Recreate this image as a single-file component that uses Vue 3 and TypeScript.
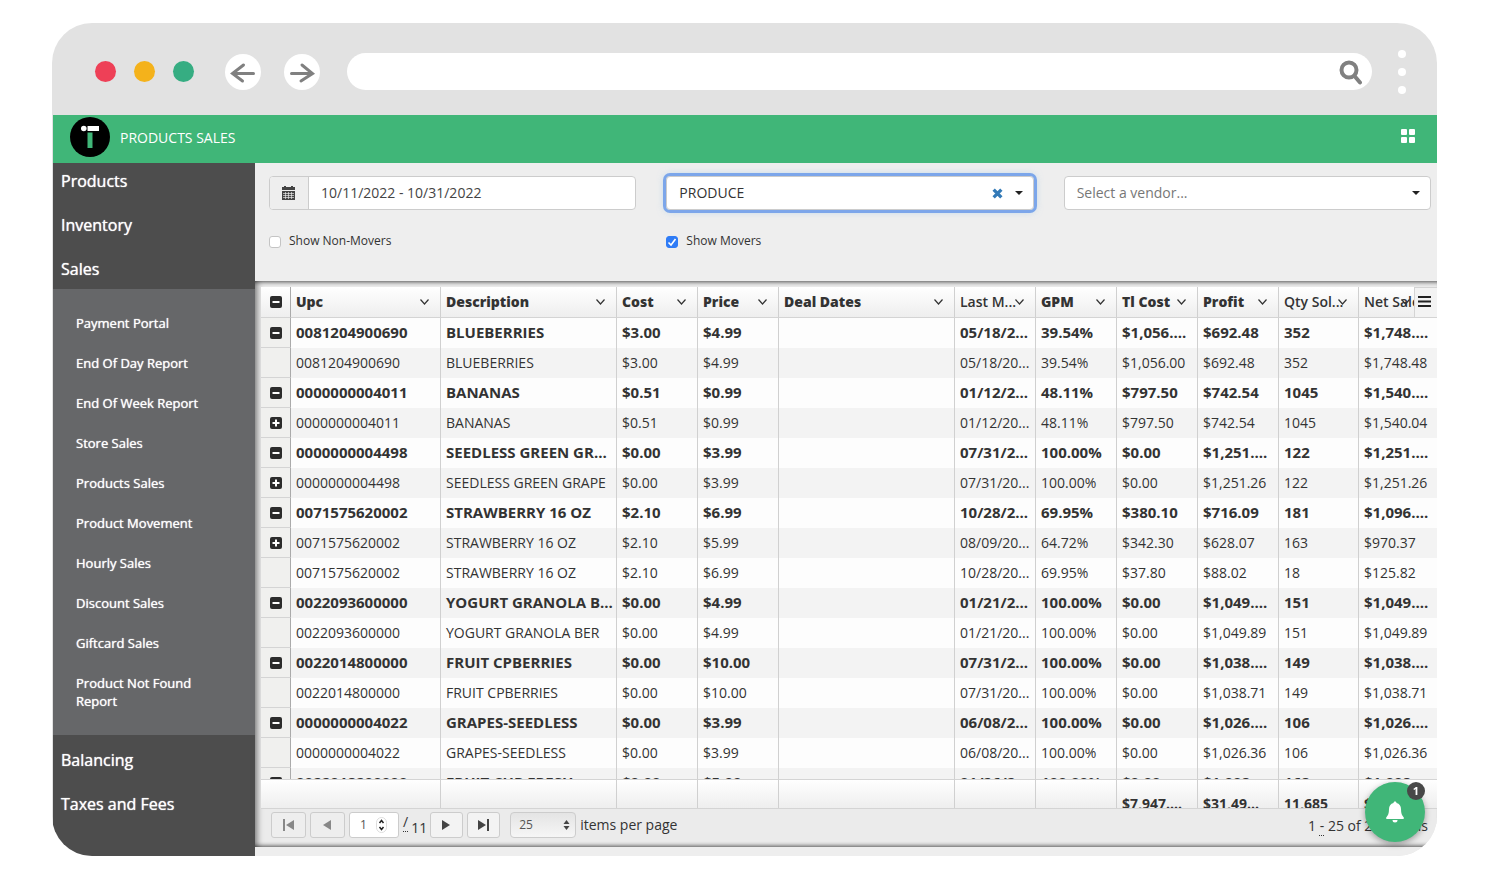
<script setup lang="ts">
import { ref } from 'vue'

type Toggle = 'minus' | 'plus' | ''
interface Row {
  toggle: Toggle
  group: boolean
  cells: string[]
}

const submenu = [
  'Payment Portal', 'End Of Day Report', 'End Of Week Report', 'Store Sales', 'Products Sales',
  'Product Movement', 'Hourly Sales', 'Discount Sales', 'Giftcard Sales', 'Product Not Found Report',
]

const columns = [
  { label: 'Upc', cls: 'c-upc', strong: true },
  { label: 'Description', cls: 'c-wide', strong: true },
  { label: 'Cost', cls: 'c-num', strong: true },
  { label: 'Price', cls: 'c-num', strong: true },
  { label: 'Deal Dates', cls: 'c-auto', strong: true },
  { label: 'Last M...', cls: 'c-num', strong: false },
  { label: 'GPM', cls: 'c-num', strong: true },
  { label: 'Tl Cost', cls: 'c-num', strong: true },
  { label: 'Profit', cls: 'c-num', strong: true },
  { label: 'Qty Sol...', cls: 'c-qty', strong: false },
  { label: 'Net Sales', cls: 'c-net', strong: false },
]

const row = (toggle: Toggle, group: boolean, ...cells: string[]): Row => ({ toggle, group, cells })

const rows: Row[] = [
  row('minus', true, '0081204900690', 'BLUEBERRIES', '$3.00', '$4.99', '', '05/18/2...', '39.54%', '$1,056....', '$692.48', '352', '$1,748....'),
  row('', false, '0081204900690', 'BLUEBERRIES', '$3.00', '$4.99', '', '05/18/20...', '39.54%', '$1,056.00', '$692.48', '352', '$1,748.48'),
  row('minus', true, '0000000004011', 'BANANAS', '$0.51', '$0.99', '', '01/12/2...', '48.11%', '$797.50', '$742.54', '1045', '$1,540....'),
  row('plus', false, '0000000004011', 'BANANAS', '$0.51', '$0.99', '', '01/12/20...', '48.11%', '$797.50', '$742.54', '1045', '$1,540.04'),
  row('minus', true, '0000000004498', 'SEEDLESS GREEN GR...', '$0.00', '$3.99', '', '07/31/2...', '100.00%', '$0.00', '$1,251....', '122', '$1,251....'),
  row('plus', false, '0000000004498', 'SEEDLESS GREEN GRAPE', '$0.00', '$3.99', '', '07/31/20...', '100.00%', '$0.00', '$1,251.26', '122', '$1,251.26'),
  row('minus', true, '0071575620002', 'STRAWBERRY 16 OZ', '$2.10', '$6.99', '', '10/28/2...', '69.95%', '$380.10', '$716.09', '181', '$1,096....'),
  row('plus', false, '0071575620002', 'STRAWBERRY 16 OZ', '$2.10', '$5.99', '', '08/09/20...', '64.72%', '$342.30', '$628.07', '163', '$970.37'),
  row('', false, '0071575620002', 'STRAWBERRY 16 OZ', '$2.10', '$6.99', '', '10/28/20...', '69.95%', '$37.80', '$88.02', '18', '$125.82'),
  row('minus', true, '0022093600000', 'YOGURT GRANOLA B...', '$0.00', '$4.99', '', '01/21/2...', '100.00%', '$0.00', '$1,049....', '151', '$1,049....'),
  row('', false, '0022093600000', 'YOGURT GRANOLA BER', '$0.00', '$4.99', '', '01/21/20...', '100.00%', '$0.00', '$1,049.89', '151', '$1,049.89'),
  row('minus', true, '0022014800000', 'FRUIT CPBERRIES', '$0.00', '$10.00', '', '07/31/2...', '100.00%', '$0.00', '$1,038....', '149', '$1,038....'),
  row('', false, '0022014800000', 'FRUIT CPBERRIES', '$0.00', '$10.00', '', '07/31/20...', '100.00%', '$0.00', '$1,038.71', '149', '$1,038.71'),
  row('minus', true, '0000000004022', 'GRAPES-SEEDLESS', '$0.00', '$3.99', '', '06/08/2...', '100.00%', '$0.00', '$1,026....', '106', '$1,026....'),
  row('', false, '0000000004022', 'GRAPES-SEEDLESS', '$0.00', '$3.99', '', '06/08/20...', '100.00%', '$0.00', '$1,026.36', '106', '$1,026.36'),
  row('minus', true, '0022018200000', 'FRUIT CUP FRESH', '$0.00', '$5.99', '', '01/26/2...', '100.00%', '$0.00', '$1,008....', '168', '$1,008....'),
]

const totals = ['', '', '', '', '', '', '', '$7,947....', '$31,49...', '11,685', '$39,4...']

const dates = ref('10/11/2022 - 10/31/2022')
const department = ref('PRODUCE')
const vendor = ref('')
const nonMovers = ref(false)
const movers = ref(true)
const page = ref(1)
const pageSize = ref('25')
</script>

<template>
  <div class="browser">
    <header class="chrome">
      <div class="lights"><i class="red"></i><i class="amber"></i><i class="green"></i></div>
      <button class="round" aria-label="Back">
        <svg width="36" height="36" viewBox="0 0 36 36"><path d="M28.500 19.500H8M18.500 11L7.500 19.500L17.500 27" /></svg>
      </button>
      <button class="round" aria-label="Forward">
        <svg width="36" height="36" viewBox="0 0 36 36"><path d="M7.500 19.500H28M18 11L28.500 19.500L17 27" /></svg>
      </button>
      <div class="address">
        <input type="text" aria-label="Address" />
        <svg width="24" height="26" viewBox="0 0 24 26"><circle cx="10" cy="11" r="7.500" /><path d="M15.500 17L21 23.500" /></svg>
      </div>
      <button class="dots" aria-label="Browser menu"><i></i><i></i><i></i></button>
    </header>

    <div class="app">
      <div class="topbar">
        <svg class="logo" width="40" height="40" viewBox="0 0 40 40">
          <circle cx="20" cy="20" r="20" fill="#000" />
          <circle cx="13.800" cy="11.500" r="2.800" fill="#fff" />
          <rect x="17.500" y="9" width="11.500" height="5" fill="#fff" />
          <rect x="17.500" y="15.500" width="5" height="15.500" fill="#40b678" />
        </svg>
        <h1>PRODUCTS SALES</h1>
        <button class="apps" aria-label="Apps">
          <svg width="14" height="14" viewBox="0 0 14 14" fill="#fff">
            <rect width="6" height="6" rx="1" /><rect x="8" width="6" height="6" rx="1" />
            <rect y="8" width="6" height="6" rx="1" /><rect x="8" y="8" width="6" height="6" rx="1" />
          </svg>
        </button>
      </div>

      <div class="body">
        <nav class="sidebar">
          <div class="group">
            <a href="#">Products</a>
            <a href="#">Inventory</a>
            <a href="#">Sales</a>
          </div>
          <div class="sub">
            <a v-for="item in submenu" :key="item" href="#">{{ item }}</a>
          </div>
          <div class="group lower">
            <a href="#">Balancing</a>
            <a href="#">Taxes and Fees</a>
          </div>
        </nav>

        <main>
          <form class="filters" @submit.prevent>
            <div class="field">
              <div class="box date">
                <label for="dates" aria-label="Date range">
                  <svg width="13" height="14" viewBox="0 0 13 14">
                    <path fill="#444" d="M0 1h2V0h2v1h5V0h2v1h2v3H0z" />
                    <path fill="#444" d="M0 5h13v9H0z" />
                    <path stroke="#eee" stroke-width="1" fill="none" d="M1 7.500h11M1 9.500h11M1 11.500h11M3.500 6v7M6.500 6v7M9.500 6v7" opacity=".65" />
                  </svg>
                </label>
                <input id="dates" v-model="dates" type="text" />
              </div>
              <label class="check"><input v-model="nonMovers" type="checkbox" /><span>Show Non-Movers</span></label>
            </div>
            <div class="field">
              <div class="box pick focused">
                <select v-model="department" aria-label="Department"><option>PRODUCE</option></select>
                <button type="button" class="clear" aria-label="Clear department">
                  <svg width="11" height="11" viewBox="0 0 10 10"><path d="M1.500 1.500L8.500 8.500M8.500 1.500L1.500 8.500" stroke="#337ab7" stroke-width="3" /></svg>
                </button>
                <i class="caret"></i>
              </div>
              <label class="check"><input v-model="movers" type="checkbox" /><span>Show Movers</span></label>
            </div>
            <div class="field">
              <div class="box pick empty">
                <select v-model="vendor" aria-label="Vendor"><option value="">Select a vendor...</option></select>
                <i class="caret"></i>
              </div>
            </div>
          </form>

          <section class="panel">
            <div class="grid">
              <table>
                <thead>
                  <tr>
                    <th class="tog">
                      <button aria-label="Collapse all"><svg width="12" height="12" viewBox="0 0 12 12"><rect width="12" height="12" rx="2" fill="#2b2b2b" /><path d="M2.500 6h7" stroke="#fff" stroke-width="2" /></svg></button>
                    </th>
                    <th v-for="c in columns" :key="c.label" :class="[c.cls, { strong: c.strong }]">
                      <div class="head">
                        <span>{{ c.label }}</span>
                        <svg width="9" height="6" viewBox="0 0 9 6"><path d="M0.500 0.500L4.500 5L8.500 0.500" fill="none" stroke="#333" stroke-width="1.200" /></svg>
                      </div>
                    </th>
                  </tr>
                </thead>
                <tbody>
                  <tr v-for="(r, i) in rows" :key="i" :class="{ bold: r.group }">
                    <td class="tog">
                      <button v-if="r.toggle" :aria-label="r.toggle === 'minus' ? 'Collapse' : 'Expand'">
                        <svg width="12" height="12" viewBox="0 0 12 12">
                          <rect width="12" height="12" rx="2" fill="#2b2b2b" />
                          <path :d="r.toggle === 'minus' ? 'M2.5 6h7' : 'M2.5 6h7M6 2.5v7'" stroke="#fff" stroke-width="2" />
                        </svg>
                      </button>
                    </td>
                    <td v-for="(cell, j) in r.cells" :key="j">{{ cell }}</td>
                  </tr>
                </tbody>
                <tfoot>
                  <tr>
                    <td class="tog"></td>
                    <td v-for="(t, j) in totals" :key="j"><div>{{ t }}</div></td>
                  </tr>
                </tfoot>
              </table>
              <button class="menu" aria-label="Grid menu">
                <svg width="13" height="11" viewBox="0 0 13 11"><path d="M0 1h13M0 5.500h13M0 10h13" stroke="#222" stroke-width="2" /></svg>
              </button>
            </div>

            <footer class="pager">
              <button class="off" aria-label="First page"><svg width="13" height="12" viewBox="0 0 13 12"><path d="M1 0h2v12H1zM12 1v10L4 6z" /></svg></button>
              <button class="off" aria-label="Previous page"><svg width="13" height="12" viewBox="0 0 13 12"><path d="M10 1v10L2 6z" /></svg></button>
              <div class="num">
                <input v-model="page" type="text" aria-label="Page" />
                <svg width="11" height="16" viewBox="0 0 11 16">
                  <rect x=".5" y=".5" width="10" height="15" rx="5" fill="#fff" stroke="#ddd" />
                  <path d="M3.500 6L5.500 3.500L7.500 6M3.500 10L5.500 12.500L7.500 10" fill="none" stroke="#222" stroke-width="1.500" />
                </svg>
              </div>
              <span class="of"><abbr title="of">/</abbr><span>11</span></span>
              <button aria-label="Next page"><svg width="13" height="12" viewBox="0 0 13 12"><path d="M2 1v10L10 6z" /></svg></button>
              <button aria-label="Last page"><svg width="13" height="12" viewBox="0 0 13 12"><path d="M1 1v10L9 6zM10 0h2v12h-2z" /></svg></button>
              <label class="size">
                <span class="selectbox">
                  <select v-model="pageSize"><option>25</option></select>
                  <svg width="7" height="10" viewBox="0 0 7 10"><path d="M3.500 0L6.500 4H.5zM3.500 10L6.500 6H.5z" fill="#444" /></svg>
                </span>
                <span>items per page</span>
              </label>
              <span class="count">1 <abbr title="through">-</abbr> 25 of 264 items</span>
            </footer>
          </section>
        </main>
      </div>

      <button class="bell" aria-label="Notifications">
        <svg width="20" height="22" viewBox="0 0 20 22" fill="#fff">
          <path d="M10 0.500c1 0 1.500.6 1.500 1.500C14.500 2.700 16 5 16 8c0 4.500 1 6.500 2.600 8.200.6.800.2 1.800-.8 1.800H2.200c-1 0-1.400-1-.8-1.800C3 14.500 4 12.500 4 8c0-3 1.500-5.300 4.500-6 0-.9.500-1.500 1.500-1.500z" />
          <path d="M7.500 19h5a2.500 2.500 0 0 1-5 0z" />
        </svg>
        <span class="badge">1</span>
      </button>
    </div>
  </div>
</template>

<style>
body {
  margin: 0;
  background: #fff;
}
</style>

<style scoped>
* {
  box-sizing: border-box;
}
.browser {
  display: flex;
  flex-direction: column;
  height: calc(100vh - 48px);
  margin: 23px 52px 0;
  border-radius: 40px;
  overflow: hidden;
  background: #e2e2e2;
  font: 14px/20px "Open Sans", "Noto Sans", sans-serif;
  color: #333;
}
button,
input,
select {
  font: inherit;
  color: inherit;
  margin: 0;
}
button {
  display: flex;
  align-items: center;
  justify-content: center;
  border: 0;
  padding: 0;
  background: none;
}
a {
  color: #fff;
  text-decoration: none;
}
.chrome {
  display: flex;
  align-items: center;
  height: 92px;
  flex: none;
  padding: 5px 31px 0 43px;
}
.lights {
  display: flex;
  gap: 18px;
  margin-right: 31px;
}
.lights i {
  width: 21px;
  height: 21px;
  border-radius: 50%;
}
.red { background: #ee4057; }
.amber { background: #f4b21b; }
.green { background: #36ad82; }
.round {
  width: 36px;
  height: 36px;
  margin-right: 23px;
  border-radius: 50%;
  background: #fff;
}
.round svg {
  fill: none;
  stroke: #808080;
  stroke-width: 3;
  stroke-linecap: round;
}
.round + .address {
  margin-left: 4px;
}
.address {
  flex: 1;
  display: flex;
  align-items: center;
  height: 37px;
  padding: 0 9px 0 16px;
  border-radius: 19px;
  background: #fff;
}
.address input {
  flex: 1;
  min-width: 0;
  border: 0;
  outline: 0;
  background: none;
}
.address svg {
  fill: none;
  stroke: #808080;
  stroke-width: 4;
  stroke-linecap: round;
}
.dots {
  flex-direction: column;
  gap: 10px;
  margin-left: 26px;
}
.dots i {
  width: 8px;
  height: 8px;
  border-radius: 50%;
  background: #fff;
}
.app {
  position: relative;
  flex: 1;
  min-height: 0;
  display: flex;
  flex-direction: column;
  margin-left: 1px;
}
.topbar {
  display: flex;
  align-items: center;
  height: 48px;
  flex: none;
  padding: 0 22px 4px 17px;
  background: #40b678;
  color: #fff;
}
h1 {
  flex: 1;
  margin: 2px 0 0 10px;
  font-size: 14px;
  font-weight: 400;
}
.apps {
  margin-top: -2px;
}
.body {
  flex: 1;
  min-height: 0;
  display: flex;
}
.sidebar {
  width: 202px;
  flex: none;
  background: #4d4d4d;
  text-shadow: 0 0 1px #fff;
}
.group {
  display: flex;
  flex-direction: column;
  gap: 8px;
  padding-bottom: 2px;
}
.group a {
  padding: 6px 8px;
  font-size: 16px;
  line-height: 24px;
}
.lower {
  padding-top: 7px;
}
.sub {
  display: flex;
  flex-direction: column;
  gap: 22px;
  padding: 25px 40px 25px 23px;
  background: #666769;
}
.sub a {
  font-size: 13px;
  line-height: 18px;
}
main {
  flex: 1;
  min-width: 0;
  display: flex;
  flex-direction: column;
  padding-bottom: 9px;
  background: #eee;
}
.filters {
  display: grid;
  grid-template-columns: repeat(3, 1fr);
  gap: 30px;
  height: 118px;
  flex: none;
  padding: 13px 6px 0 14px;
}
.box {
  position: relative;
  display: flex;
  height: 34px;
  border: 1px solid #ccc;
  border-radius: 4px;
  background: #fff;
}
.date label {
  display: flex;
  align-items: center;
  justify-content: center;
  width: 39px;
  padding-right: 1px;
  border-right: 1px solid #ccc;
  border-radius: 3px 0 0 3px;
  background: #eee;
}
.box input,
.box select {
  flex: 1;
  min-width: 0;
  padding: 0 12px;
  border: 0;
  border-radius: 4px;
  outline: 0;
  background: none;
  color: #444;
  appearance: none;
}
.focused {
  outline: 3px solid #7ca6ea;
  box-shadow: 0 0 8px rgba(102, 175, 233, 0.6);
}
.box.focused select {
  color: #333;
}
.box.empty select {
  color: #777;
}
.caret {
  position: absolute;
  right: 10px;
  top: 14px;
  border: 4px solid transparent;
  border-top-color: #222;
  border-bottom: 0;
}
.clear {
  position: absolute;
  right: 30px;
  top: 11px;
}
.check {
  display: flex;
  align-items: center;
  gap: 8px;
  margin-top: 21px;
  font-size: 12px;
}
.check input {
  appearance: none;
  width: 12px;
  height: 12px;
  margin-top: 2px;
  border: 1px solid #c4c4c4;
  border-radius: 3px;
  background: #fff;
}
.check input:checked {
  border-color: #2f7cf6;
  background: #2f7cf6 url("data:image/svg+xml,%3Csvg xmlns='http://www.w3.org/2000/svg' viewBox='0 0 10 10'%3E%3Cpath d='M1.500 5.500L4 8L8.500 2' fill='none' stroke='white' stroke-width='1.600'/%3E%3C/svg%3E") center / 10px;
}
.panel {
  flex: 1;
  min-height: 0;
  display: flex;
  flex-direction: column;
  padding: 6px 0 0 6px;
  background: #ebebeb;
  box-shadow: inset 7px 0 6px -5px rgba(0, 0, 0, 0.5), inset 0 5px 4px -4px rgba(0, 0, 0, 0.65),
    inset 0 -5px 4px -4px rgba(0, 0, 0, 0.65);
}
.grid {
  position: relative;
  flex: 1;
  min-height: 0;
  overflow: hidden;
  border-bottom: 1px solid #d4d4d4;
}
table {
  width: 100%;
  table-layout: fixed;
  border-spacing: 0;
}
th,
td {
  padding: 0 2px 0 5px;
  border-right: 1px solid #d0d0d0;
  overflow: hidden;
  text-align: left;
  text-overflow: ellipsis;
  white-space: nowrap;
}
th:last-child,
td:last-child {
  border-right: 0;
}
thead th {
  height: 31px;
  border-bottom: 1px solid #d4d4d4;
  background: linear-gradient(#fff, #eee);
  font-weight: 600;
}
thead .strong {
  font-weight: 800;
}
.head {
  display: flex;
  align-items: center;
}
.head span {
  flex: 1;
}
.head svg {
  flex: none;
  margin: 0 9px 0 -9px;
}
.tog {
  width: 30px;
  padding: 0;
}
.tog button {
  width: 29px;
  height: 28px;
}
.c-upc { width: 150px; }
.c-wide { width: 176px; }
.c-num { width: 81px; }
.c-qty { width: 80px; }
.c-net { width: 78px; }
.c-net .head svg { margin-right: 25px; margin-left: -34px; }
tbody td {
  height: 30px;
  background: #fdfdfd;
}
tbody tr:nth-child(even) td {
  background: #f3f3f3;
}
tbody tr .tog,
tbody tr:nth-child(even) .tog {
  border-right-color: #aaa;
  border-bottom: 1px solid #d4d4d4;
  background: #f0f0ee;
}
thead .tog {
  border-right-color: #aaa;
}
.bold td {
  font-size: 15px;
  font-weight: 700;
}
.bold td:not(.tog) {
  padding-bottom: 2px;
}
tfoot td {
  position: sticky;
  bottom: 0;
  height: 29px;
  border-top: 1px solid #d4d4d4;
  background: linear-gradient(#fff, #eee);
  font-weight: 700;
}
tfoot div {
  height: 28px;
  padding-top: 14px;
  overflow: hidden;
}
tfoot .tog {
  border-right: 0;
}
.menu {
  position: absolute;
  top: 0;
  right: 0;
  width: 23px;
  height: 31px;
  padding-right: 3px;
  padding-bottom: 2px;
  border: 1px solid #d4d4d4;
  border-right: 0;
  background: #f3f3f3;
}
.pager {
  display: flex;
  align-items: center;
  height: 38px;
  flex: none;
  padding: 0 9px 7px 10px;
}
.pager > button {
  width: 33px;
  height: 26px;
  margin-right: 4px;
  border: 1px solid #ccc;
  border-radius: 3px;
  background: #f3f3f3;
  fill: #444;
}
.pager > .off {
  width: 35px;
  background: #eee;
  fill: #888;
}
.num {
  display: flex;
  align-items: center;
  width: 50px;
  height: 26px;
  padding: 0 11px 0 10px;
  border: 1px solid #ccc;
  border-radius: 3px;
  background: #fff;
}
.num input {
  flex: 1;
  min-width: 0;
  padding: 0;
  border: 0;
  background: none;
  color: #555;
  font-size: 12px;
}
abbr {
  text-decoration: underline dotted 1px;
  text-underline-offset: 4px;
}
.of {
  display: flex;
  gap: 3px;
  padding: 0 3px 0 4px;
}
.of span {
  padding-top: 6px;
}
.size {
  display: flex;
  align-items: center;
  gap: 4px;
  margin-left: 6px;
}
.selectbox {
  display: flex;
  align-items: center;
  width: 66px;
  height: 26px;
  padding-right: 5px;
  border: 1px solid #ccc;
  border-radius: 4px;
  background: linear-gradient(#e4e4e4, #f6f6f6);
}
.selectbox select {
  flex: 1;
  min-width: 0;
  padding: 0 0 0 8px;
  border: 0;
  background: none;
  color: #555;
  font-size: 12px;
  appearance: none;
}
.count {
  margin-left: auto;
  padding-top: 2px;
}
.bell {
  position: absolute;
  right: 12px;
  bottom: 14px;
  width: 60px;
  height: 60px;
  border-radius: 50%;
  background: #40b678;
  box-shadow: 0 2px 6px rgba(0, 0, 0, 0.35);
}
.badge {
  position: absolute;
  top: 0;
  right: 0;
  width: 18px;
  height: 18px;
  border-radius: 50%;
  background: #484848;
  color: #fff;
  font-size: 11px;
  font-weight: 700;
  line-height: 18px;
  text-align: center;
}
</style>
